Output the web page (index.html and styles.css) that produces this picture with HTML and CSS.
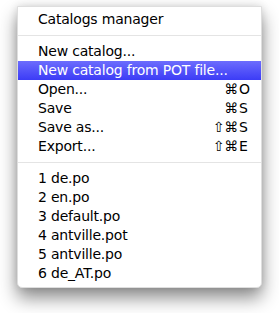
FILE: index.html
```html
<!DOCTYPE html>
<html>
<head>
<meta charset="utf-8">
<link rel="stylesheet" href="styles.css">
</head>
<body>
<div class="menu">
  <div class="item">Catalogs manager</div>
  <div class="sep"></div>
  <div class="item">New catalog...</div>
  <div class="item active">New catalog from POT file...</div>
  <div class="item"><span class="label">Open...</span><span class="mods">⌘</span><span class="key">O</span></div>
  <div class="item"><span class="label">Save</span><span class="mods">⌘</span><span class="key">S</span></div>
  <div class="item"><span class="label">Save as...</span><span class="mods">⇧⌘</span><span class="key">S</span></div>
  <div class="item"><span class="label">Export...</span><span class="mods">⇧⌘</span><span class="key">E</span></div>
  <div class="sep"></div>
  <div class="item">1 de.po</div>
  <div class="item">2 en.po</div>
  <div class="item">3 default.po</div>
  <div class="item">4 antville.pot</div>
  <div class="item">5 antville.po</div>
  <div class="item">6 de_AT.po</div>
</div>
</body>
</html>
```
FILE: styles.css
```css
html, body {
  margin: 0;
  padding: 0;
  background: #ffffff;
}
body {
  box-sizing: border-box;
  min-height: 313px;
  padding: 6px 0 0 17px;
  font-family: "DejaVu Sans", "Liberation Sans", sans-serif;
  font-size: 14px;
  letter-spacing: -0.2px;
  color: #000;
}
.menu {
  width: 243px;
  height: 277px;
  padding: 3px 0 0 0;
  border: 1px solid #dedede;
  border-radius: 0 0 5px 5px;
  background: #fff;
  box-shadow: 0 10px 18px rgba(0, 0, 0, 0.45), 0 0 8px rgba(0, 0, 0, 0.12);
}
.item {
  height: 19px;
  line-height: 19px;
  padding-left: 20px;
  display: flex;
  white-space: nowrap;
}
.item.active {
  background: linear-gradient(#6c6cfd, #3c3cf6);
  color: #fff;
}
.label {
  flex: 1;
}
.mods {
  text-align: right;
}
.key {
  width: 22px;
  padding-left: 1px;
}
.sep {
  height: 13px;
  display: flex;
  align-items: center;
}
.sep::after {
  content: "";
  display: block;
  width: 100%;
  height: 1px;
  background: #e4e4e4;
}
```
